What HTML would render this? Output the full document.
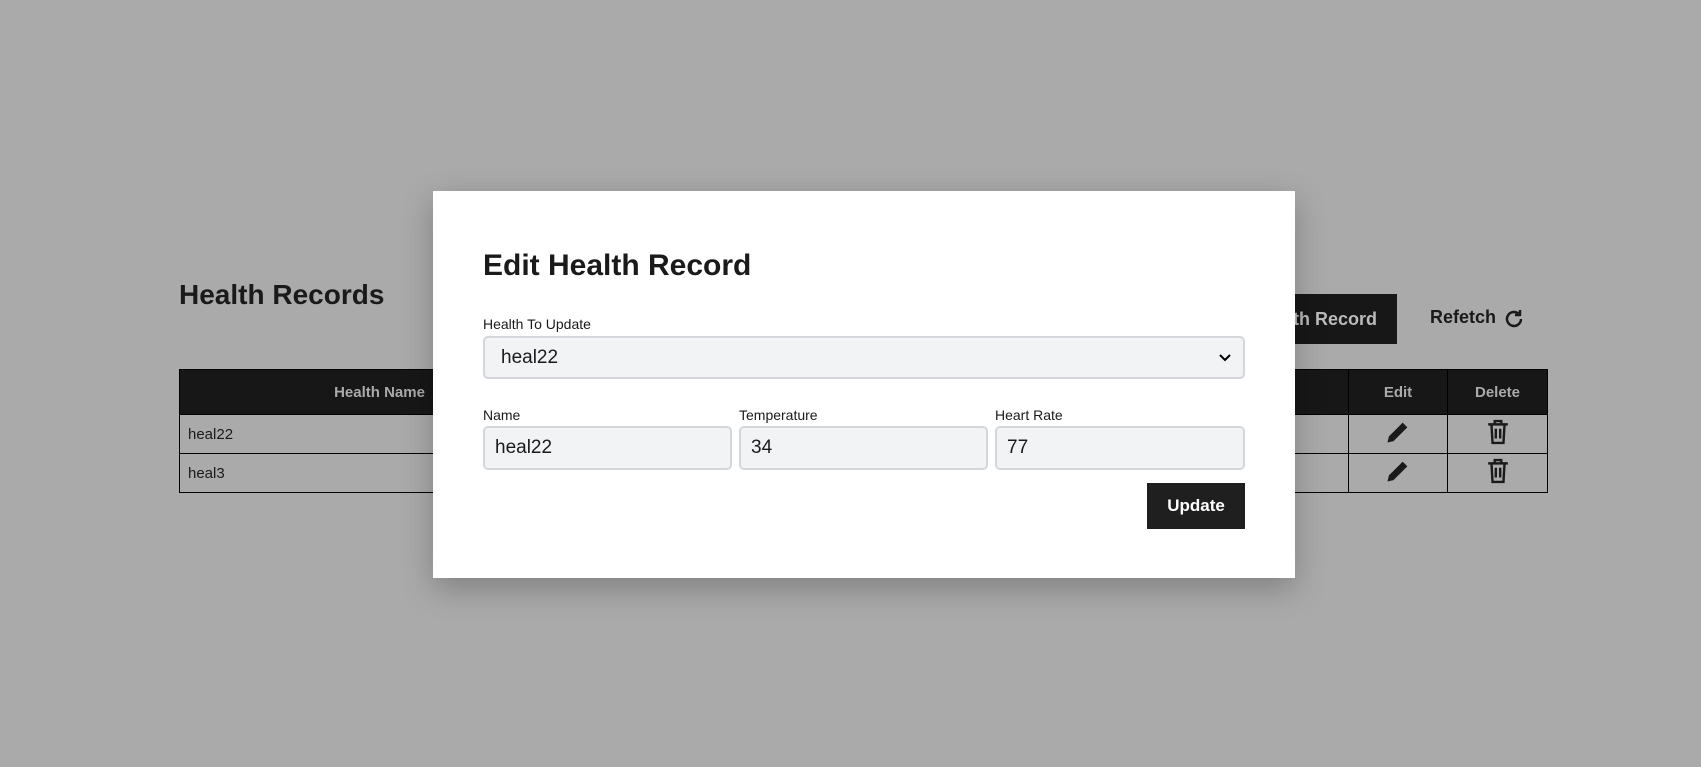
<!DOCTYPE html>
<html><head><meta charset="utf-8"><style>
*{box-sizing:border-box;margin:0;padding:0}
body{width:1701px;height:767px;background:#aaaaaa;font-family:"Segoe UI","Liberation Sans",sans-serif;position:relative;overflow:hidden;color:#1a1a1a}
.a{position:absolute}
table{border-collapse:collapse;position:absolute;left:179px;top:369px;width:1369px;font-size:15px}
th{background:#171717;color:#aaa;height:45px;border:1px solid #000;font-weight:bold}
td{height:39px;border:1px solid #000;padding-left:8px;color:#1a1a1a}
.modal{left:433px;top:191px;width:862px;height:387px;background:#fff;box-shadow:0 10px 30px rgba(0,0,0,.25)}
.f{position:absolute;background:#f2f3f5;border:2px solid #d4d6db;border-radius:5px;font-size:19px;padding-left:10px;display:flex;align-items:center;color:#1a1a1a}
.l{position:absolute;font-size:14px;color:#1a1a1a}
</style></head><body>
<div class="a" style="left:179px;top:279px;font-size:28px;font-weight:bold">Health Records</div>
<div class="a" style="left:1200px;top:294px;width:197px;height:50px;background:#171717;color:#bbb;font-size:18px;font-weight:bold;display:flex;align-items:center;justify-content:flex-end;padding-right:20px">Add Health Record</div>
<div class="a" style="left:1430px;top:307px;font-size:18px;font-weight:bold">Refetch</div>
<svg class="a" style="left:1502px;top:307px" width="24" height="24" viewBox="0 0 24 24" fill="none" stroke="#1a1a1a" stroke-width="2.5"><path d="M19 12a7 7 0 1 1-2.5-5.4"/><path d="M18 3v5h-5" stroke-linejoin="round"/></svg>
<table><tr><th style="width:400px">Health Name</th><th></th><th style="width:99px">Edit</th><th style="width:100px">Delete</th></tr>
<tr><td>heal22</td><td></td><td style="text-align:center;padding:0"><svg width="28" height="28" viewBox="0 0 24 24"><path d="M3 21l1.2-5.2L16 4l4 4L8.2 19.8z" fill="#1a1a1a"/></svg></td><td style="text-align:center;padding:0"><svg width="24" height="28" viewBox="0 0 22 24" fill="none" stroke="#1a1a1a" stroke-width="2.2"><path d="M2 5h18M8 5V2h6v3M5 5l1 17h10l1-17M9 9v9M13 9v9"/></svg></td></tr>
<tr><td>heal3</td><td></td><td style="text-align:center;padding:0"><svg width="28" height="28" viewBox="0 0 24 24"><path d="M3 21l1.2-5.2L16 4l4 4L8.2 19.8z" fill="#1a1a1a"/></svg></td><td style="text-align:center;padding:0"><svg width="24" height="28" viewBox="0 0 22 24" fill="none" stroke="#1a1a1a" stroke-width="2.2"><path d="M2 5h18M8 5V2h6v3M5 5l1 17h10l1-17M9 9v9M13 9v9"/></svg></td></tr></table>
<div class="a modal"></div>
<div class="a" style="left:483px;top:249px;font-size:30px;font-weight:bold">Edit Health Record</div>
<div class="l" style="left:483px;top:316px">Health To Update</div>
<div class="f" style="left:483px;top:336px;width:762px;height:43px;padding-left:16px">heal22<svg style="position:absolute;right:12px;top:16px" width="12" height="8" viewBox="0 0 12 8"><path d="M1 1l5 5 5-5" fill="none" stroke="#000" stroke-width="2"/></svg></div>
<div class="l" style="left:483px;top:407px">Name</div>
<div class="l" style="left:739px;top:407px">Temperature</div>
<div class="l" style="left:995px;top:407px">Heart Rate</div>
<div class="f" style="left:483px;top:426px;width:249px;height:44px">heal22</div>
<div class="f" style="left:739px;top:426px;width:249px;height:44px">34</div>
<div class="f" style="left:995px;top:426px;width:250px;height:44px">77</div>
<div class="a" style="left:1147px;top:483px;width:98px;height:46px;background:#1f1f1f;color:#fff;font-weight:bold;font-size:17px;display:flex;align-items:center;justify-content:center">Update</div>
</body></html>
